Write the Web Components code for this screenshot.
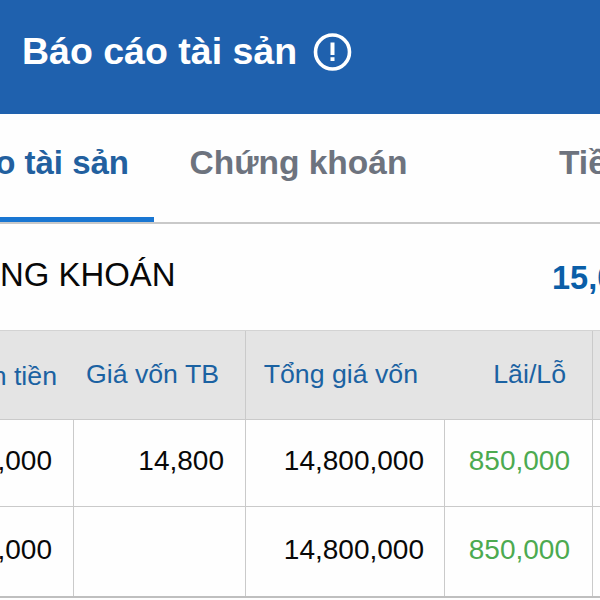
<!DOCTYPE html>
<html lang="vi">
<head>
<meta charset="utf-8">
<title>Báo cáo tài sản</title>
<style>
  body {
    margin: 0;
    width: 600px;
    height: 600px;
    overflow: hidden;
    background: #fefefe;
    font-family: "Liberation Sans", Arial, sans-serif;
  }
</style>
</head>
<body>
<report-app></report-app>
<script>
class BaseElement extends HTMLElement {
  constructor() {
    super();
    this.shadow = this.attachShadow({ mode: "open" });
  }

  connectedCallback() {
    this.shadow.innerHTML = `<style>${this.renderStyle()}</style>${this.renderHTML()}`;
  }
}

customElements.define("page-header", class extends BaseElement {
  renderStyle() {
    return `
      :host {
        box-sizing: border-box;
        display: flex;
        align-items: center;
        gap: 15px;
        height: 114px;
        padding: 0 0 11px 22px;
        background: #1f61ae;
        color: #fff;
        font-size: 37.5px;
        font-weight: bold;
        white-space: nowrap;
      }
      svg { display: block; }
    `;
  }

  renderHTML() {
    return `
      <span><slot></slot></span>
      <svg width="40" height="40" viewBox="0 0 40 40" fill="none" stroke="#fff">
        <circle cx="20.5" cy="20" r="17" stroke-width="3.6"/>
        <path d="M20.5 10.5v12.5M20.5 25.3v3.8" stroke-width="4"/>
      </svg>
    `;
  }
});

customElements.define("tab-bar", class extends BaseElement {
  renderStyle() {
    return `
      :host {
        box-sizing: border-box;
        display: grid;
        grid-template-columns: 154px 289px 1fr;
        height: 110px;
        border-bottom: 2px solid #c9c9c9;
        overflow: hidden;
      }
    `;
  }

  renderHTML() {
    return `<slot></slot>`;
  }
});

customElements.define("tab-item", class extends BaseElement {
  renderStyle() {
    return `
      :host {
        box-sizing: border-box;
        display: flex;
        align-items: center;
        justify-content: center;
        height: 108px;
        padding-bottom: 11px;
        color: #6d737e;
        font-size: 33.5px;
        font-weight: bold;
        white-space: nowrap;
      }
      :host([active]) {
        justify-content: flex-end;
        padding-right: 25px;
        padding-bottom: 6px;
        border-bottom: 5px solid #1976d2;
        color: #22609f;
        font-size: 33px;
      }
      :host([cut]) {
        justify-content: flex-start;
        padding-left: 116px;
      }
    `;
  }

  renderHTML() {
    return `<span><slot></slot></span>`;
  }
});

customElements.define("section-summary", class extends BaseElement {
  renderStyle() {
    return `
      :host {
        box-sizing: border-box;
        display: flex;
        justify-content: space-between;
        height: 106px;
        overflow: hidden;
        white-space: nowrap;
        font-size: 32.9px;
        line-height: 40px;
        color: #080808;
      }
      .label { padding-top: 31px; }
      .value {
        width: 48px;
        padding-top: 34px;
        font-size: 32.5px;
        font-weight: bold;
        color: #0a5ea8;
      }
    `;
  }

  renderHTML() {
    return `
      <span class="label"><slot></slot></span>
      <span class="value"><slot name="value"></slot></span>
    `;
  }
});

customElements.define("asset-row", class extends BaseElement {
  renderStyle() {
    return `
      :host {
        box-sizing: border-box;
        display: grid;
        grid-template-columns: 74px 172px 199px 148px 7px;
        height: 87px;
        border-bottom: 1px solid #cacaca;
      }
      :host([last]) {
        height: 91px;
        border-bottom: 2px solid #bfbfbf;
      }
      :host([head]) {
        height: 90px;
        background: #e4e4e4;
        border-top: 1px solid #d3d3d3;
      }
    `;
  }

  renderHTML() {
    return `<slot></slot>`;
  }
});

customElements.define("asset-cell", class extends BaseElement {
  renderStyle() {
    return `
      :host {
        box-sizing: border-box;
        display: flex;
        align-items: center;
        justify-content: flex-end;
        min-width: 0;
        padding: 0 21px 4px 0;
        border-right: 1px solid #cacaca;
        font-size: 28px;
        color: #080808;
        white-space: nowrap;
      }
      :host(:last-child) { border-right: 0; }
      :host([gain]) {
        padding-right: 22px;
        color: #4caa50;
      }
      :host([total]) { padding-right: 20px; }
      :host([head]) {
        padding: 0 26px 2px 0;
        font-size: 26.7px;
        color: #1b62a2;
      }
      :host([plain]) { border-right-color: transparent; }
      :host([first]) { padding: 3px 16px 0 0; }
    `;
  }

  renderHTML() {
    return `<span><slot></slot></span>`;
  }
});

customElements.define("report-app", class extends BaseElement {
  renderStyle() {
    return `
      :host {
        display: block;
        width: 600px;
      }
    `;
  }

  renderHTML() {
    return `
      <page-header>Báo cáo tài sản</page-header>
      <tab-bar>
        <tab-item active>o tài sản</tab-item>
        <tab-item>Chứng khoán</tab-item>
        <tab-item cut>Tiề</tab-item>
      </tab-bar>
      <section-summary>NG KHOÁN<span slot="value">15,0</span></section-summary>
      <asset-row head>
        <asset-cell head plain first>n tiền</asset-cell>
        <asset-cell head>Giá vốn TB</asset-cell>
        <asset-cell head plain>Tổng giá vốn</asset-cell>
        <asset-cell head>Lãi/Lỗ</asset-cell>
        <asset-cell head></asset-cell>
      </asset-row>
      <asset-row>
        <asset-cell>,000</asset-cell>
        <asset-cell>14,800</asset-cell>
        <asset-cell total>14,800,000</asset-cell>
        <asset-cell gain>850,000</asset-cell>
        <asset-cell></asset-cell>
      </asset-row>
      <asset-row last>
        <asset-cell>,000</asset-cell>
        <asset-cell></asset-cell>
        <asset-cell total>14,800,000</asset-cell>
        <asset-cell gain>850,000</asset-cell>
        <asset-cell></asset-cell>
      </asset-row>
    `;
  }
});
</script>
</body>
</html>
